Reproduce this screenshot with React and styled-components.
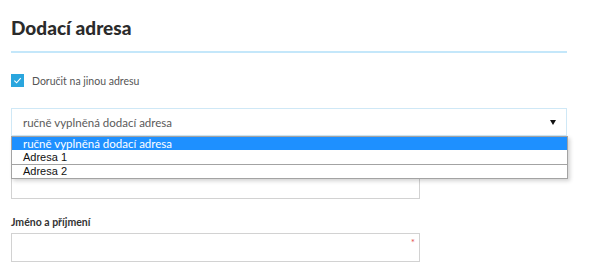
import React from 'react';
import styled, { createGlobalStyle } from 'styled-components';

const GlobalStyle = createGlobalStyle`
  html, body {
    margin: 0;
    padding: 0;
    background: #ffffff;
  }
  body {
    font-family: Lato, "Open Sans", sans-serif;
    color: #333333;
  }
`;

const Page = styled.div`
  width: 556px;
  padding-left: 11px;
`;

const Header = styled.div`
  padding-top: 16px;
  padding-bottom: 11px;
  border-bottom: 2px solid #c4e7fa;
`;

const Title = styled.h1`
  margin: 0;
  font-family: Lato, "Open Sans", sans-serif;
  font-size: 19px;
  line-height: 24px;
  font-weight: 900;
  color: #2b2b2b;
`;

const CheckRow = styled.label`
  display: flex;
  align-items: center;
  gap: 8px;
  margin-top: 21px;
  height: 13px;
  font-size: 10.5px;
  color: #555555;
`;

const CheckBox = styled.span`
  width: 13px;
  height: 13px;
  background: #2aa6de;
  display: flex;
  align-items: center;
  justify-content: center;
  flex-shrink: 0;
`;

const SelectWrap = styled.div`
  position: relative;
  margin-top: 21px;
  z-index: 2;
`;

const SelectBox = styled.div`
  height: 26px;
  border: 1px solid #cfe8f6;
  display: flex;
  align-items: center;
  justify-content: space-between;
  padding: 0 10px 0 11px;
  font-size: 11.5px;
  color: #5a5a5a;
`;

const Arrow = styled.span`
  width: 0;
  height: 0;
  border-left: 3.5px solid transparent;
  border-right: 3.5px solid transparent;
  border-top: 5px solid #111111;
`;

const Dropdown = styled.ul`
  position: absolute;
  top: 100%;
  left: 0;
  width: 555px;
  margin: 0;
  padding: 0;
  list-style: none;
  background: #ffffff;
  border: 1px solid #a3a3a3;
  box-shadow: 2px 2px 4px rgba(0, 0, 0, 0.18);
`;

const Option = styled.li`
  height: ${({ $tall }) => ($tall ? 14 : 13)}px;
  line-height: ${({ $tall }) => ($tall ? 14 : 13)}px;
  padding-left: 11px;
  font-family: ${({ $active }) => ($active ? 'Lato, sans-serif' : '"Liberation Sans", Arial, sans-serif')};
  font-size: ${({ $active }) => ($active ? 11.5 : 11)}px;
  color: ${({ $active }) => ($active ? '#ffffff' : '#111111')};
  background: ${({ $active }) => ($active ? '#1e90ff' : 'transparent')};
  border-top: ${({ $divided }) => ($divided ? '1px solid #a3a3a3' : 'none')};
`;

const Field = styled.div`
  margin-top: 16px;
`;

const Label = styled.div`
  height: 14px;
  font-size: 10.5px;
  line-height: 14px;
  font-weight: 700;
  color: #333333;
  margin-bottom: 4px;
`;

const InputBox = styled.div`
  position: relative;
  width: 407px;
  height: 27px;
  border: 1px solid #d2d2d2;
`;

const Required = styled.span`
  position: absolute;
  top: 3px;
  right: 4px;
  color: #e2504f;
  font-size: 10px;
  line-height: 10px;
`;

const Check = () => (
  <svg width="9" height="9" viewBox="0 0 10 10">
    <path d="M1.5 5.2 L4 7.6 L8.6 2.4" fill="none" stroke="#ffffff" strokeWidth="1.2" />
  </svg>
);

export default function App() {
  const options = ['ručně vyplněná dodací adresa', 'Adresa 1', 'Adresa 2'];
  return (
    <Page>
      <GlobalStyle />
      <Header>
        <Title>Dodací adresa</Title>
      </Header>
      <CheckRow>
        <CheckBox>
          <Check />
        </CheckBox>
        Doručit na jinou adresu
      </CheckRow>
      <SelectWrap>
        <SelectBox>
          <span>ručně vyplněná dodací adresa</span>
          <Arrow />
        </SelectBox>
        <Dropdown>
          {options.map((o, i) => (
            <Option key={o} $active={i === 0} $tall={i === 1} $divided={i === 2}>
              {o}
            </Option>
          ))}
        </Dropdown>
      </SelectWrap>
      <Field>
        {/* label of this field lies under the open list */}
        <Label />
        <InputBox />
      </Field>
      <Field>
        <Label>Jméno a příjmení</Label>
        <InputBox>
          <Required>*</Required>
        </InputBox>
      </Field>
    </Page>
  );
}
